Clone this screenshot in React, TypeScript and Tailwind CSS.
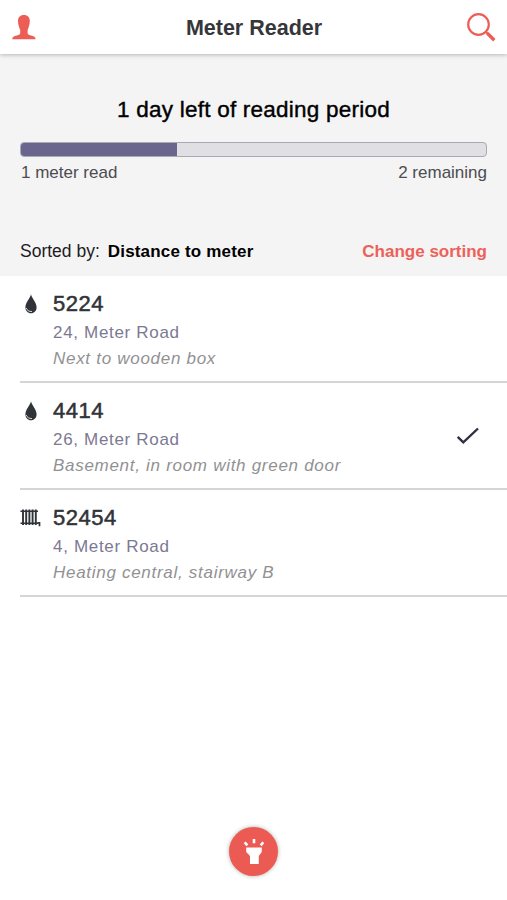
import React from "react";
import { clsx } from "clsx";

interface Meter {
  id: string;
  type: "water" | "heating";
  address: string;
  note: string;
  done?: boolean;
}

const meters: Meter[] = [
  {
    id: "5224",
    type: "water",
    address: "24, Meter Road",
    note: "Next to wooden box",
  },
  {
    id: "4414",
    type: "water",
    address: "26, Meter Road",
    note: "Basement, in room with green door",
    done: true,
  },
  {
    id: "52454",
    type: "heating",
    address: "4, Meter Road",
    note: "Heating central, stairway B",
  },
];

const UserIcon = () => (
  <svg width="24" height="25" viewBox="0 0 24 25" fill="#ec5e55">
    <path d="M11.900 0C8 0 6 2.400 6 6c0 2.300.5 4 1 5.700.4 1.500 1 2.600 1.200 3.600v3c0 1.200-1.200 1.700-3.300 2.200C2 21.200.2 22.100.2 24.200h23.400c0-2.100-1.800-3-4.700-3.700-2.100-.5-3.300-1-3.300-2.200v-3c.2-1 .8-2.100 1.200-3.600.5-1.700 1-3.400 1-5.700 0-3.600-2-6-5.900-6z" />
  </svg>
);

const SearchIcon = () => (
  <svg width="29" height="29" viewBox="0 0 29 29" fill="none" stroke="#ec5e55">
    <circle cx="11.500" cy="11.500" r="10.300" strokeWidth="2.200" />
    <path d="M18.800 18.800l2 2" strokeWidth="2.200" />
    <path d="M20.300 20.300l7 7" strokeWidth="3.400" />
  </svg>
);

const DropIcon = () => (
  <svg width="12" height="20" viewBox="0 0 12 20">
    <path
      d="M6 .2C5.300 4 .4 8.400.4 13.200c0 3.600 2.400 6 5.600 6s5.600-2.400 5.600-6C11.600 8.400 6.700 4 6 .2z"
      fill="#303338"
    />
    <path
      d="M1.200 14c.8 2.400 3 3.700 5.800 3.500"
      fill="none"
      stroke="#fff"
      strokeWidth=".8"
    />
  </svg>
);

const RadiatorIcon = () => (
  <svg width="21" height="19" viewBox="0 0 21 19" stroke="#303338" fill="none">
    <path
      d="M3 1.500v15.500M6.200 1.500v15.500M9.400 1.500v15.500M12.600 1.500v15.500M15.800 1.500v15.500"
      strokeWidth="1.900"
    />
    <path d="M.5 3.300h17.500M.5 15.300h17.500" strokeWidth="1.400" />
    <path d="M17.500 14.900h2v3.300" strokeWidth="1.700" />
  </svg>
);

const CheckIcon = () => (
  <svg width="23" height="18" viewBox="0 0 23 18" fill="none">
    <path d="M1.700 9.800l5.600 5.500L22 1.500" stroke="#303140" strokeWidth="2.400" />
  </svg>
);

const TorchIcon = () => (
  <svg width="22" height="26" viewBox="0 0 22 26" fill="#fff">
    <path d="M3.200 8.500h15.600v4c0 1.500-3 3.300-3 5v7.500H7v-7.500c0-1.700-3.800-3.500-3.800-5z" />
    <rect x="9.700" y="0" width="2.600" height="4.300" rx=".5" />
    <path
      d="M1.700 3.200l2.600 3.200M20.300 3.200l-2.600 3.200"
      stroke="#fff"
      strokeWidth="2.600"
    />
  </svg>
);

const MeterRow: React.FC<{ meter: Meter }> = ({ meter }) => (
  <li className="ml-5 flex h-[107px] border-b-2 border-[#d5d5d7]">
    <div
      className={clsx(
        "flex w-[33px] shrink-0 pt-[18px]",
        meter.type === "water" && "pl-[5px]"
      )}
    >
      {meter.type === "water" ? <DropIcon /> : <RadiatorIcon />}
    </div>
    <div className="flex-1 whitespace-nowrap pt-[14px]">
      <h2 className="text-[22px] leading-7 tracking-[0.5px] text-[#303338] [-webkit-text-stroke:0.5px_#303338]">
        {meter.id}
      </h2>
      <p className="mt-px text-[17px] leading-[28px] tracking-[0.68px] text-[#7c7992]">
        {meter.address}
      </p>
      <p className="text-[17px] leading-6 tracking-[0.71px] text-[#919193] italic">
        {meter.note}
      </p>
    </div>
    {meter.done && (
      <div className="mr-7 pt-[44px]">
        <CheckIcon />
      </div>
    )}
  </li>
);

export default function App() {
  return (
    <div className="flex h-[900px] w-[507px] flex-col overflow-hidden bg-white font-['Liberation_Sans',Arial,sans-serif]">
      <header className="z-10 flex h-[54px] shrink-0 items-center justify-between bg-white pr-[11px] pl-3 shadow-[0_1px_4px_rgba(0,0,0,0.25)]">
        <button className="w-[29px]">
          <UserIcon />
        </button>
        <h1 className="pt-0.5 text-[21.5px] leading-7 font-bold text-[#35363a]">
          Meter Reader
        </h1>
        <button>
          <SearchIcon />
        </button>
      </header>

      <section className="flex h-[222px] shrink-0 flex-col bg-[#f4f4f5] px-5 pt-[42px]">
        <h2 className="text-center text-[22.5px] leading-7 tracking-[0.23px] text-black [-webkit-text-stroke:0.4px_black]">
          1 day left of reading period
        </h2>
        <div className="mt-[18px] h-[15px] overflow-hidden rounded-[4px] border border-[#aaa9b2] bg-[#e0e0e4]">
          <div className="h-full w-[156px] bg-[#6a658f]" />
        </div>
        <div className="mt-1 flex justify-between text-[17px] leading-6 text-[#4c4c51]">
          <span className="ml-px">1 meter read</span>
          <span>2 remaining</span>
        </div>
        <div className="mt-[55px] flex items-start text-[17px] leading-6">
          <span className="-mt-px text-[17.5px] text-[#1c1c1e]">
            Sorted by:
          </span>
          <span className="ml-2 font-bold tracking-[0.18px] text-black">
            Distance to meter
          </span>
          <button className="ml-auto font-bold text-[#ec6159]">
            Change sorting
          </button>
        </div>
      </section>

      <ul>
        {meters.map((meter) => (
          <MeterRow key={meter.id} meter={meter} />
        ))}
      </ul>

      <footer className="mt-auto flex justify-center pb-6">
        <button className="flex size-[49px] items-center justify-center rounded-full bg-[#ec5b53] shadow-[0_0_4px_rgba(0,0,0,0.3)]">
          <TorchIcon />
        </button>
      </footer>
    </div>
  );
}
